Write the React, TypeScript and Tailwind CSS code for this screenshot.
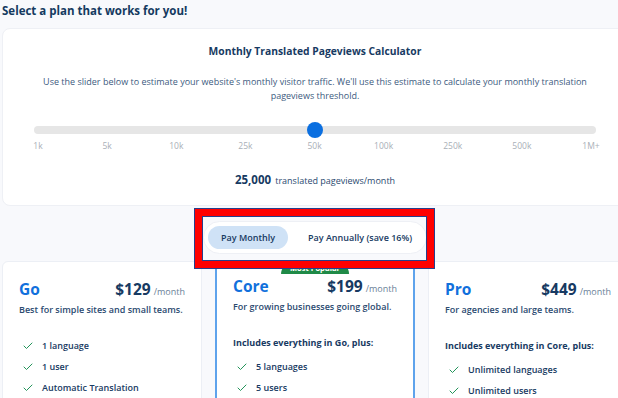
import { Check } from "lucide-react";

const ticks = ["1k", "5k", "10k", "25k", "50k", "100k", "250k", "500k", "1M+"];

interface Plan {
  name: string;
  price: string;
  blurb: string;
  heading?: string;
  features: string[];
  popular?: boolean;
}

const plans: Plan[] = [
  {
    name: "Go",
    price: "$129",
    blurb: "Best for simple sites and small teams.",
    features: ["1 language", "1 user", "Automatic Translation"],
  },
  {
    name: "Core",
    price: "$199",
    blurb: "For growing businesses going global.",
    heading: "Includes everything in Go, plus:",
    features: ["5 languages", "5 users"],
    popular: true,
  },
  {
    name: "Pro",
    price: "$449",
    blurb: "For agencies and large teams.",
    heading: "Includes everything in Core, plus:",
    features: ["Unlimited languages", "Unlimited users"],
  },
];

function PlanCard({ plan }: { plan: Plan }) {
  return (
    <div
      className={`relative min-h-[180px] w-[200px] shrink-0 rounded-[6px] bg-white px-4 ${
        plan.popular ? "border-2 border-[#5ea3ec] pt-[13px]" : "border border-[#eceff5] pt-[17px]"
      }`}
    >
      {plan.popular && (
        <div className="absolute left-1/2 top-0 flex h-[11px] -translate-x-1/2 items-center rounded-b-[6px] rounded-t-full bg-[#1f8a47] px-[9px] text-[7.5px] font-bold text-white">
          Most Popular
        </div>
      )}
      <div className="flex items-baseline justify-between">
        <span className="text-[15.5px] font-bold leading-[20px] text-[#1170dc]">{plan.name}</span>
        <span className="flex items-baseline gap-[3px]">
          <span className="text-[15.5px] font-bold leading-[20px] text-[#173a62]">{plan.price}</span>
          <span className="text-[9px] text-[#6a7f98]">/month</span>
        </span>
      </div>
      <p className="mt-[4px] text-[9px] font-semibold leading-[14px] text-[#2b4a70]">{plan.blurb}</p>
      <div className="mt-[22px]">
        {plan.heading && (
          <p className="mb-[10px] text-[9px] font-bold leading-[14px] text-[#173a62]">{plan.heading}</p>
        )}
        <ul className="space-y-[7px]">
          {plan.features.map((f) => (
            <li key={f} className="flex items-center gap-[8px] pl-[3px] text-[9px] font-semibold leading-[14px] text-[#173a62]">
              <Check size={12} strokeWidth={2} className="text-[#23945a]" />
              {f}
            </li>
          ))}
        </ul>
      </div>
    </div>
  );
}

export default function App() {
  return (
    <div className="h-[398px] w-[618px] overflow-hidden bg-[#f8f9fc] font-['Open_Sans',sans-serif]">
      <div className="relative ml-[2px] w-[626px]">
        {/* Header */}
        <h1 className="pt-[3px] text-[11.5px] font-bold leading-[16px] text-[#143a60]">
          Select a plan that works for you!
        </h1>

        {/* Calculator */}
        <div className="mt-[9px] rounded-[8px] border border-[#eef0f5] bg-white px-[31px] pb-[16px] pt-[14px]">
          <h2 className="text-center text-[10.3px] font-bold leading-[16px] text-[#173a62]">
            Monthly Translated Pageviews Calculator
          </h2>
          <p className="mx-auto mt-[16px] max-w-[550px] text-center text-[9px] leading-[14px] text-[#3d5b80]">
            Use the slider below to estimate your website's monthly visitor traffic. We'll use this estimate to
            calculate your monthly translation pageviews threshold.
          </p>
          <div className="relative mt-[23px] h-[8px] rounded-full bg-[#e6e6e6]">
            <div className="absolute left-1/2 top-1/2 h-[16px] w-[16px] -translate-x-1/2 -translate-y-1/2 rounded-full bg-[#0b6fe0]" />
          </div>
          <div className="ml-[4px] mr-[5px] mt-[6px] flex justify-between text-[8.5px] leading-[12px] text-[#a9afb7]">
            {ticks.map((t) => (
              <span key={t} className="flex w-0 justify-center whitespace-nowrap">
                {t}
              </span>
            ))}
          </div>
          <p className="mt-[18px] text-center leading-[16px] text-[#173a62]">
            <span className="text-[11.5px] font-bold">25,000</span>{" "}
            <span className="text-[9px] text-[#2b4a70]">translated pageviews/month</span>
          </p>
        </div>

        {/* Billing toggle */}
        <div className="mx-auto mt-[15px] flex h-[33px] w-[224px] items-center rounded-full border border-[#eef0f5] bg-white px-[4px]">
          <button className="h-[23px] w-[80px] rounded-full bg-[#cfe2f6] text-[9px] font-semibold text-[#173a62]">
            Pay Monthly
          </button>
          <button className="pl-[20px] text-[9px] font-semibold text-[#173a62]">Pay Annually (save 16%)</button>
        </div>

        {/* Plans */}
        <div className="mt-[7px] flex items-start gap-[13px]">
          {plans.map((p) => (
            <PlanCard key={p.name} plan={p} />
          ))}
        </div>

        {/* Annotation box */}
        <div className="absolute left-[192px] top-[208px] h-[61px] w-[241px] border border-[#263f8c]">
          <div className="h-full w-full border-[7px] border-[#ff0000]">
            <div className="h-full w-full border border-[#263f8c]" />
          </div>
        </div>
      </div>
    </div>
  );
}
